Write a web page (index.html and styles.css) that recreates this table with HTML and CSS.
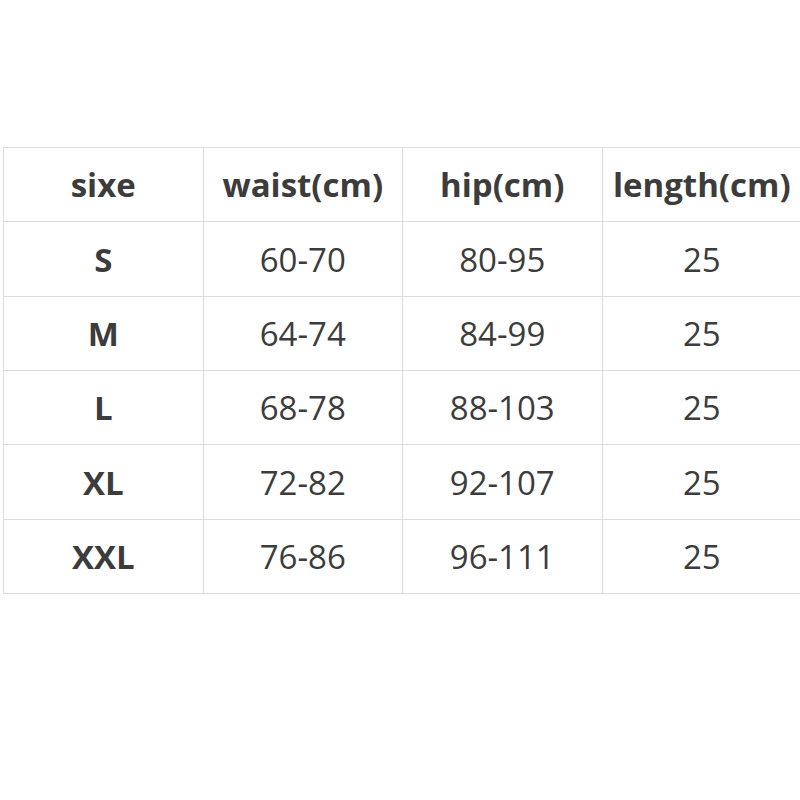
FILE: index.html
```html
<!DOCTYPE html>
<html>
<head>
<meta charset="utf-8">
<link rel="stylesheet" href="styles.css">
</head>
<body>
<table class="size-table">
  <thead>
    <tr><th>sixe</th><th>waist(cm)</th><th>hip(cm)</th><th>length(cm)</th></tr>
  </thead>
  <tbody>
    <tr><th>S</th><td>60-70</td><td>80-95</td><td>25</td></tr>
    <tr><th>M</th><td>64-74</td><td>84-99</td><td>25</td></tr>
    <tr><th>L</th><td>68-78</td><td>88-103</td><td>25</td></tr>
    <tr><th>XL</th><td>72-82</td><td>92-107</td><td>25</td></tr>
    <tr><th>XXL</th><td>76-86</td><td>96-111</td><td>25</td></tr>
  </tbody>
</table>
</body>
</html>
```

FILE: styles.css
```css
html, body {
  margin: 0;
  padding: 0;
  background: #ffffff;
  overflow: hidden;
}
body {
  width: 800px;
  height: 800px;
  padding-top: 147px;
  padding-left: 3px;
  box-sizing: border-box;
}
.size-table {
  border-collapse: collapse;
  table-layout: fixed;
  width: 798px;
  font-family: "Open Sans", "Segoe UI", sans-serif;
  color: #3c3c3c;
  font-size: 33px;
}
.size-table th,
.size-table td {
  border: 1px solid #dcdcdc;
  height: 73.35px;
  padding: 0;
  text-align: center;
  vertical-align: middle;
  width: 198.5px;
}
.size-table th {
  font-weight: 700;
}
.size-table td {
  font-weight: 400;
}
```
